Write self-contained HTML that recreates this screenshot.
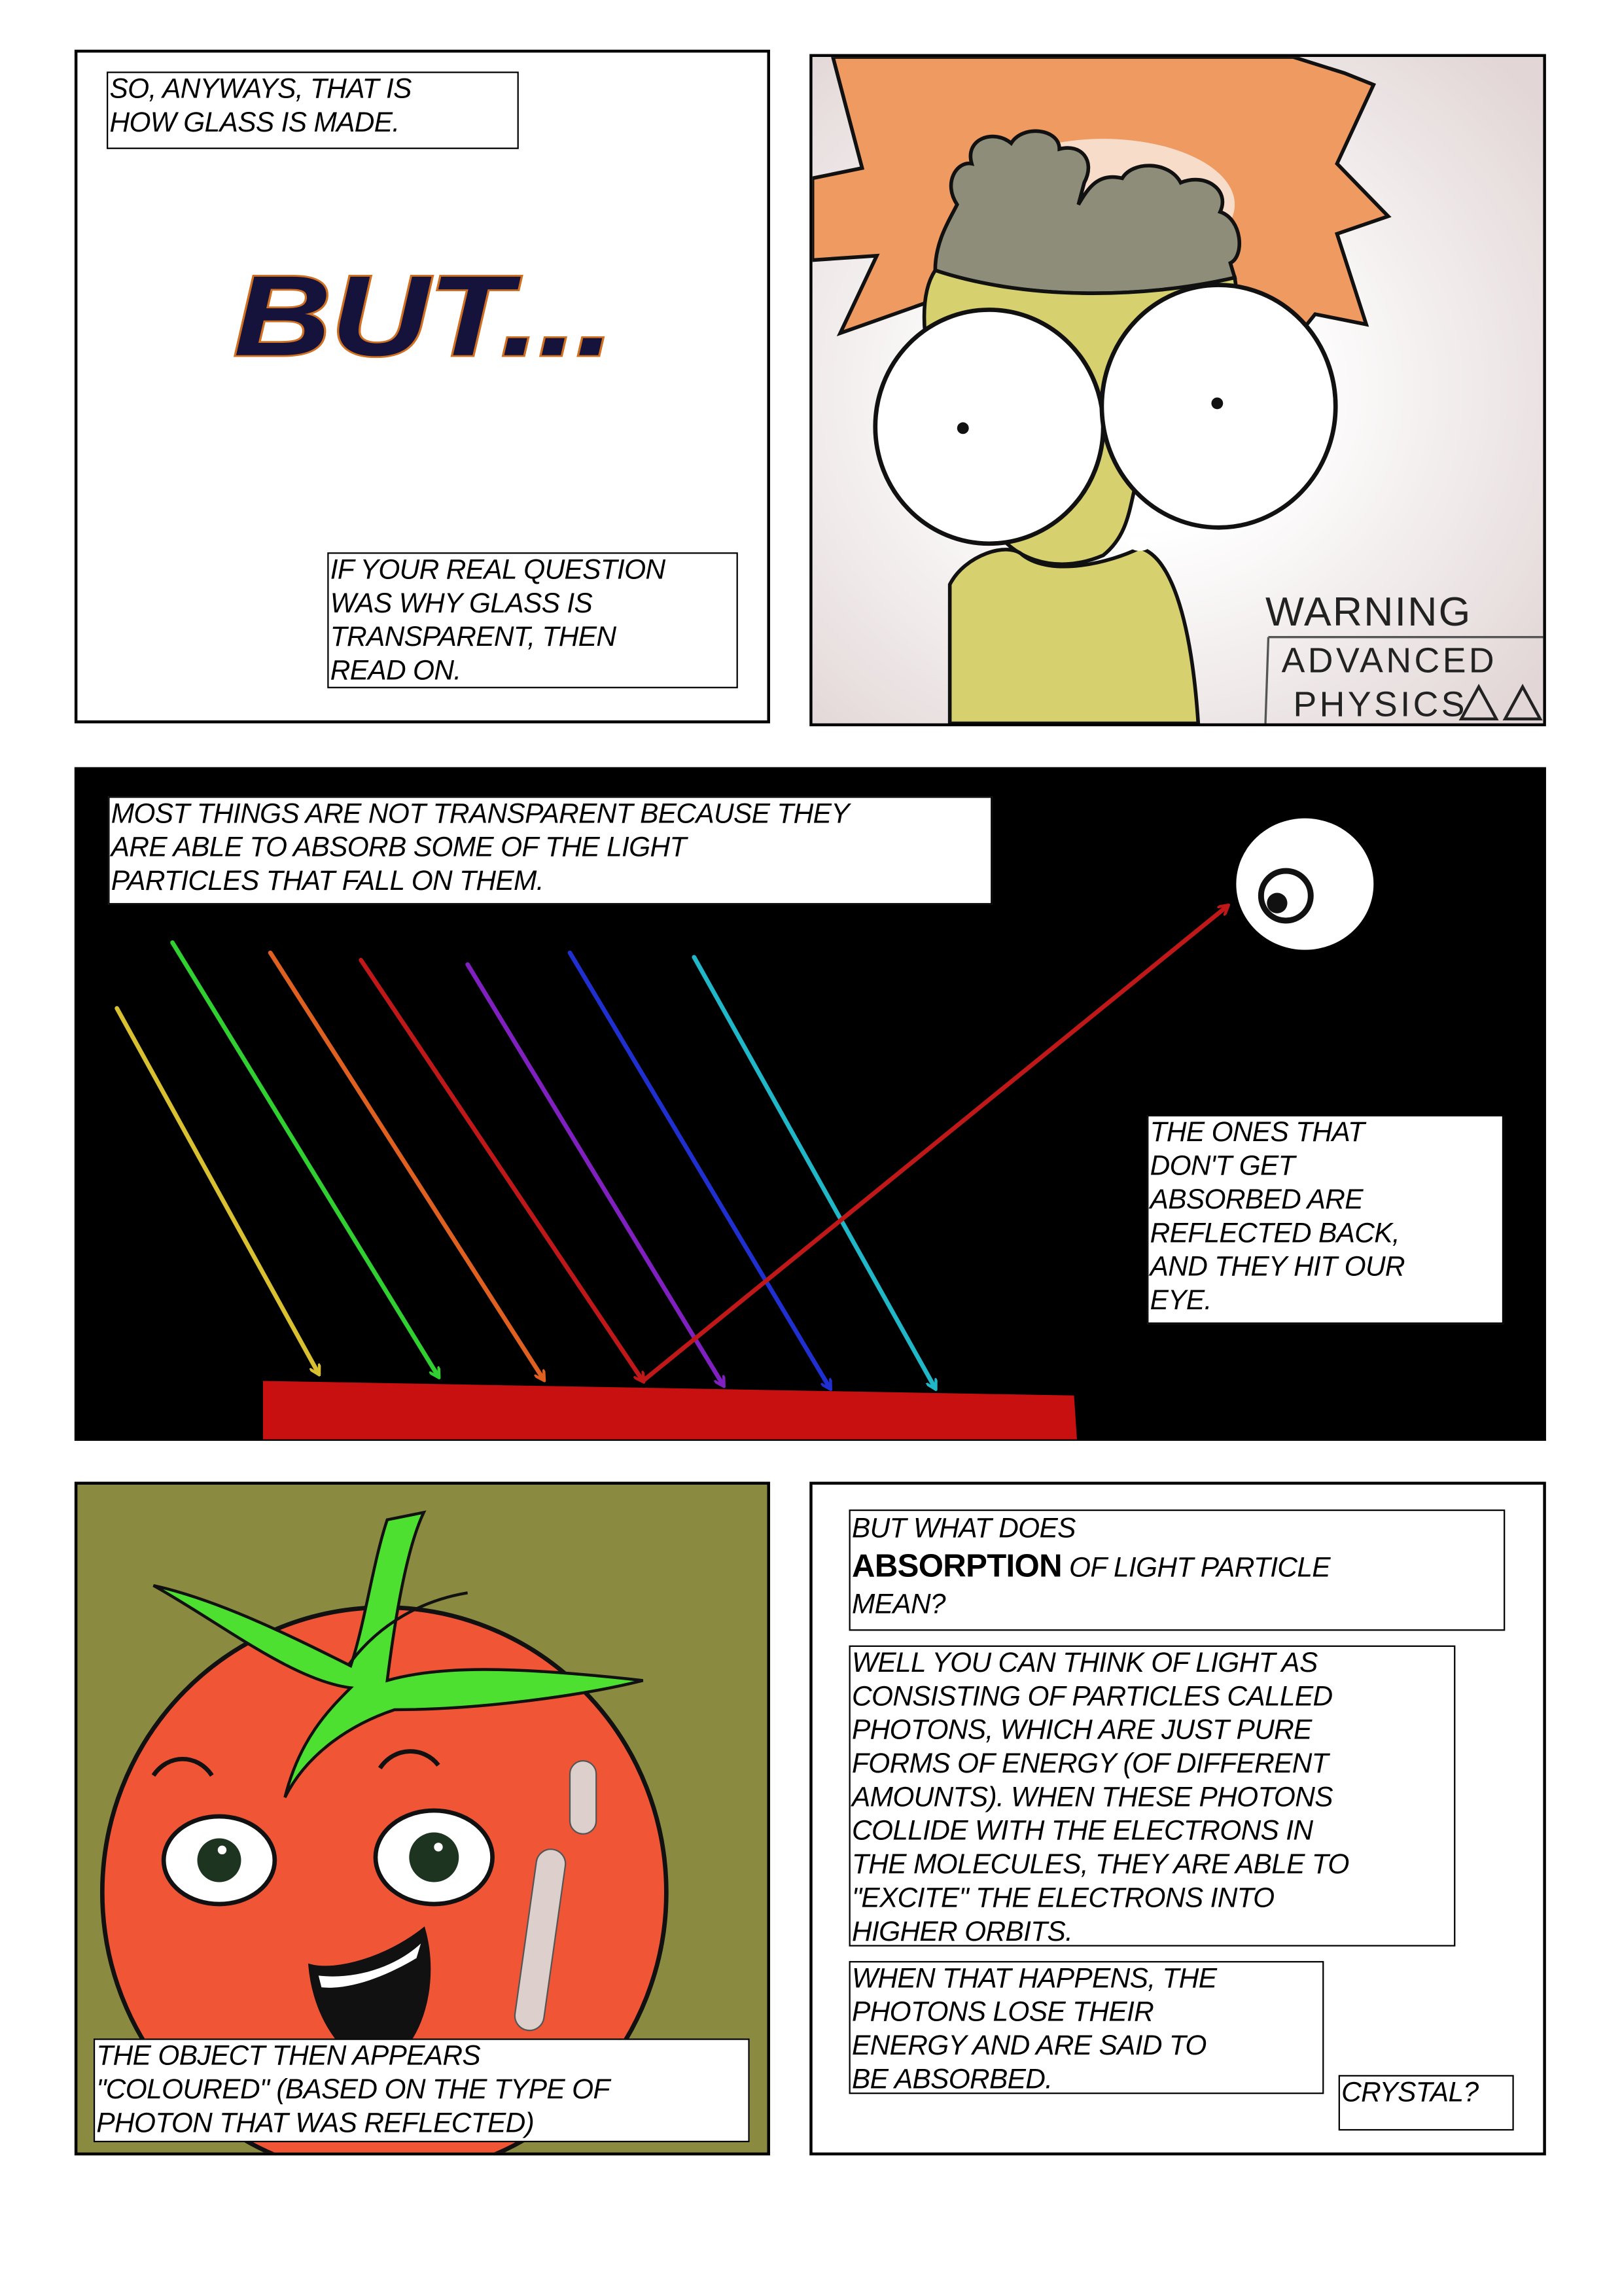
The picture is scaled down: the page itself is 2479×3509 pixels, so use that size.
<!DOCTYPE html>
<html><head><meta charset="utf-8"><style>
html,body{margin:0;padding:0;background:#fff;}
body{width:2479px;height:3508px;overflow:hidden;position:relative;}
#s{position:absolute;left:0;top:0;width:1110px;height:1571px;transform:scale(2.2333);transform-origin:0 0;}
.p{position:absolute;box-sizing:border-box;border:2px solid #000;}
.t{position:absolute;box-sizing:border-box;border:1.5px solid #000;background:#fff;font-family:"Liberation Sans Narrow","Liberation Sans",sans-serif;font-style:italic;font-size:19px;line-height:23px;color:#000;text-transform:uppercase;padding:0 0 0 1px;white-space:nowrap;letter-spacing:-0.3px}
svg{position:absolute;left:0;top:0;}
</style></head><body><div id="s">
<div class="p" style="left:51px;top:34px;width:476px;height:461px;background:#fff"></div>
<div class="p" style="left:554px;top:37px;width:504px;height:460px;background:#f3eeee;overflow:hidden"></div>
<div class="p" style="left:51px;top:525px;width:1007px;height:461px;background:#000"></div>
<div class="p" style="left:51px;top:1014px;width:476px;height:461px;background:#8a8a40"></div>
<div class="p" style="left:554px;top:1014px;width:504px;height:461px;background:#fff"></div>

<svg width="1110" height="1571" viewBox="0 0 1110 1571">
<defs>
<radialGradient id="bg" cx="0.45" cy="0.5" r="0.7"><stop offset="0.3" stop-color="#fff"/><stop offset="1" stop-color="#e2d6d6"/></radialGradient>
<clipPath id="c2"><rect x="556" y="39" width="500" height="456"/></clipPath>
<clipPath id="c4"><rect x="53" y="1016" width="472" height="457"/></clipPath>
<marker id="ah" markerWidth="8" markerHeight="8" refX="6" refY="4" orient="auto" markerUnits="userSpaceOnUse"><path d="M0,0 L7,4 L0,8" fill="none" stroke="context-stroke" stroke-width="2"/></marker>
</defs>
<!-- BUT... -->
<text x="160" y="243" textLength="260" lengthAdjust="spacingAndGlyphs" font-family="Liberation Sans Narrow,Liberation Sans,sans-serif" font-weight="bold" font-style="italic" font-size="78" fill="#15123c" stroke="#d07020" stroke-width="2.5" paint-order="stroke">BUT...</text>
<!-- panel2 drawing -->
<g clip-path="url(#c2)">
<rect x="556" y="39" width="500" height="456" fill="url(#bg)"/>
<path d="M570,39 L590,115 L556,122 L556,178 L600,175 L575,228 L640,205 L700,215 L830,200 L880,240 L900,215 L935,222 L915,160 L950,148 L915,112 L940,58 L920,50 L885,39 Z" fill="#ee9a60" stroke="#111" stroke-width="2.5"/>
<ellipse cx="755" cy="140" rx="90" ry="45" fill="#f8e8dc" opacity="0.85"/>
<path d="M640,185 C640,165 650,150 655,140 C645,125 655,110 665,112 C660,95 680,88 692,98 C700,85 725,88 725,102 C740,98 750,110 742,125 L738,140 C745,128 752,118 768,122 C775,110 800,110 808,125 C825,118 842,130 835,145 C850,150 852,175 842,180 L845,190 C780,205 700,205 640,185 Z" fill="#8e8d7a" stroke="#111" stroke-width="2.5"/>
<path d="M640,185 C700,205 780,205 845,190 C850,220 840,235 820,265 L790,300 C770,330 780,360 755,380 C720,395 690,380 680,360 C660,330 640,300 640,260 C630,230 630,200 640,185 Z" fill="#d6d06e" stroke="#111" stroke-width="2.5"/>
<path d="M650,400 C660,380 690,370 700,380 C720,395 760,385 780,375 C800,380 815,420 820,495 L650,495 Z" fill="#d6d06e" stroke="#111" stroke-width="2.5"/>
<ellipse cx="677" cy="292" rx="78" ry="80" fill="#fff" stroke="#111" stroke-width="3"/>
<ellipse cx="834" cy="278" rx="80" ry="83" fill="#fff" stroke="#111" stroke-width="3"/>
<circle cx="659" cy="293" r="4" fill="#111"/><circle cx="833" cy="276" r="4" fill="#111"/>
<ellipse cx="780" cy="372" rx="8" ry="5" fill="#fff"/>
<text x="866" y="428" font-family="Liberation Sans Narrow,Liberation Sans,sans-serif" font-size="28" fill="#222" letter-spacing="1">WARNING</text>
<path d="M868,436 L1060,436 M868,436 L866,495" stroke="#555" stroke-width="1.5" fill="none"/>
<text x="877" y="460" font-family="Liberation Sans Narrow,Liberation Sans,sans-serif" font-size="24" fill="#222" letter-spacing="2">ADVANCED</text>
<text x="885" y="490" font-family="Liberation Sans Narrow,Liberation Sans,sans-serif" font-size="24" fill="#222" letter-spacing="2">PHYSICS</text>
<path d="M1000,492 L1012,470 L1024,492 Z M1030,492 L1042,470 L1054,492 Z" fill="none" stroke="#222" stroke-width="2"/>
</g>
<!-- panel3 -->
<path d="M180,945 L735,955 L737,985 L180,985 Z" fill="#c81010"/>
<g fill="none" stroke-width="3" marker-end="url(#ah)" stroke-linecap="round">
<path d="M80,690 L218,940" stroke="#d8c030"/>
<path d="M118,645 L300,942" stroke="#30d030"/>
<path d="M185,652 L372,944" stroke="#e06020"/>
<path d="M247,657 L440,945" stroke="#c01818"/>
<path d="M320,660 L495,948" stroke="#8020c0"/>
<path d="M390,652 L568,950" stroke="#2030d0"/>
<path d="M475,655 L640,950" stroke="#20b8c8"/>
<path d="M440,945 L840,620" stroke="#c01818"/>
</g>
<ellipse cx="893" cy="605" rx="47" ry="45" fill="#fff"/>
<circle cx="880" cy="613" r="17" fill="none" stroke="#111" stroke-width="4"/>
<circle cx="874" cy="618" r="7" fill="#111"/>
<!-- tomato -->
<g clip-path="url(#c4)">
<ellipse cx="263" cy="1295" rx="193" ry="195" fill="#f05535" stroke="#111" stroke-width="3"/>
<rect x="390" y="1205" width="18" height="50" rx="9" fill="#ddd0cc" stroke="#555"/>
<rect x="360" y="1265" width="20" height="125" rx="10" fill="#ddd0cc" stroke="#555" transform="rotate(8 370 1325)"/>
<path d="M265,1040 L290,1035 C278,1060 270,1110 265,1150 C300,1140 350,1140 440,1150 C400,1160 330,1170 270,1170 C240,1180 210,1200 195,1230 C205,1190 225,1170 240,1155 C200,1150 150,1110 105,1085 C150,1095 200,1120 240,1140 C250,1110 255,1070 265,1040 Z" fill="#4ee030" stroke="#111" stroke-width="2"/>
<path d="M238,1140 C260,1110 290,1095 320,1090" fill="none" stroke="#111" stroke-width="2"/>
<ellipse cx="150" cy="1273" rx="38" ry="30" fill="#fff" stroke="#111" stroke-width="3"/>
<ellipse cx="297" cy="1271" rx="40" ry="32" fill="#fff" stroke="#111" stroke-width="3"/>
<circle cx="150" cy="1273" r="15" fill="#1d3520"/><circle cx="297" cy="1271" r="17" fill="#1d3520"/>
<circle cx="152" cy="1266" r="3" fill="#fff"/><circle cx="300" cy="1264" r="3" fill="#fff"/>
<path d="M105,1215 C115,1200 135,1200 145,1215 M260,1210 C270,1195 290,1195 300,1208" fill="none" stroke="#111" stroke-width="3"/>
<path d="M212,1345 C230,1350 265,1340 290,1320 C300,1355 290,1400 260,1415 C235,1410 215,1380 212,1345 Z" fill="#111" stroke="#111" stroke-width="2"/>
<path d="M218,1352 C245,1355 272,1345 288,1330 L285,1340 C265,1352 240,1362 220,1360 Z" fill="#fff"/>
<ellipse cx="255" cy="1405" rx="14" ry="7" fill="#f05535"/>
</g>
</svg>

<div class="t" style="left:73px;top:49px;width:282px;height:53px">So, anyways, that is<br>how glass is made.</div>
<div class="t" style="left:224px;top:378px;width:281px;height:93px">If your real question<br>was why glass is<br>transparent, then<br>read on.</div>
<div class="t" style="left:74px;top:545px;width:605px;height:74px">Most things are not transparent because they<br>are able to absorb some of the light<br>particles that fall on them.</div>
<div class="t" style="left:785px;top:763px;width:244px;height:143px">The ones that<br>don't get<br>absorbed are<br>reflected back,<br>and they hit our<br>eye.</div>
<div class="t" style="left:64px;top:1395px;width:449px;height:71px">The object then appears<br>"coloured" (based on the type of<br>photon that was reflected)</div>
<div class="t" style="left:581px;top:1033px;width:449px;height:83px;line-height:25px">But what does<br><b style="font-style:normal;font-size:22px">ABSORPTION</b> of light particle<br>mean?</div>
<div class="t" style="left:581px;top:1126px;width:415px;height:206px">Well you can think of light as<br>consisting of particles called<br>photons, which are just pure<br>forms of energy (of different<br>amounts). When these photons<br>collide with the electrons in<br>the molecules, they are able to<br>"excite" the electrons into<br>higher orbits.</div>
<div class="t" style="left:581px;top:1342px;width:325px;height:91px">When that happens, the<br>photons lose their<br>energy and are said to<br>be absorbed.</div>
<div class="t" style="left:916px;top:1420px;width:120px;height:38px">Crystal?</div>
</div></body></html>
